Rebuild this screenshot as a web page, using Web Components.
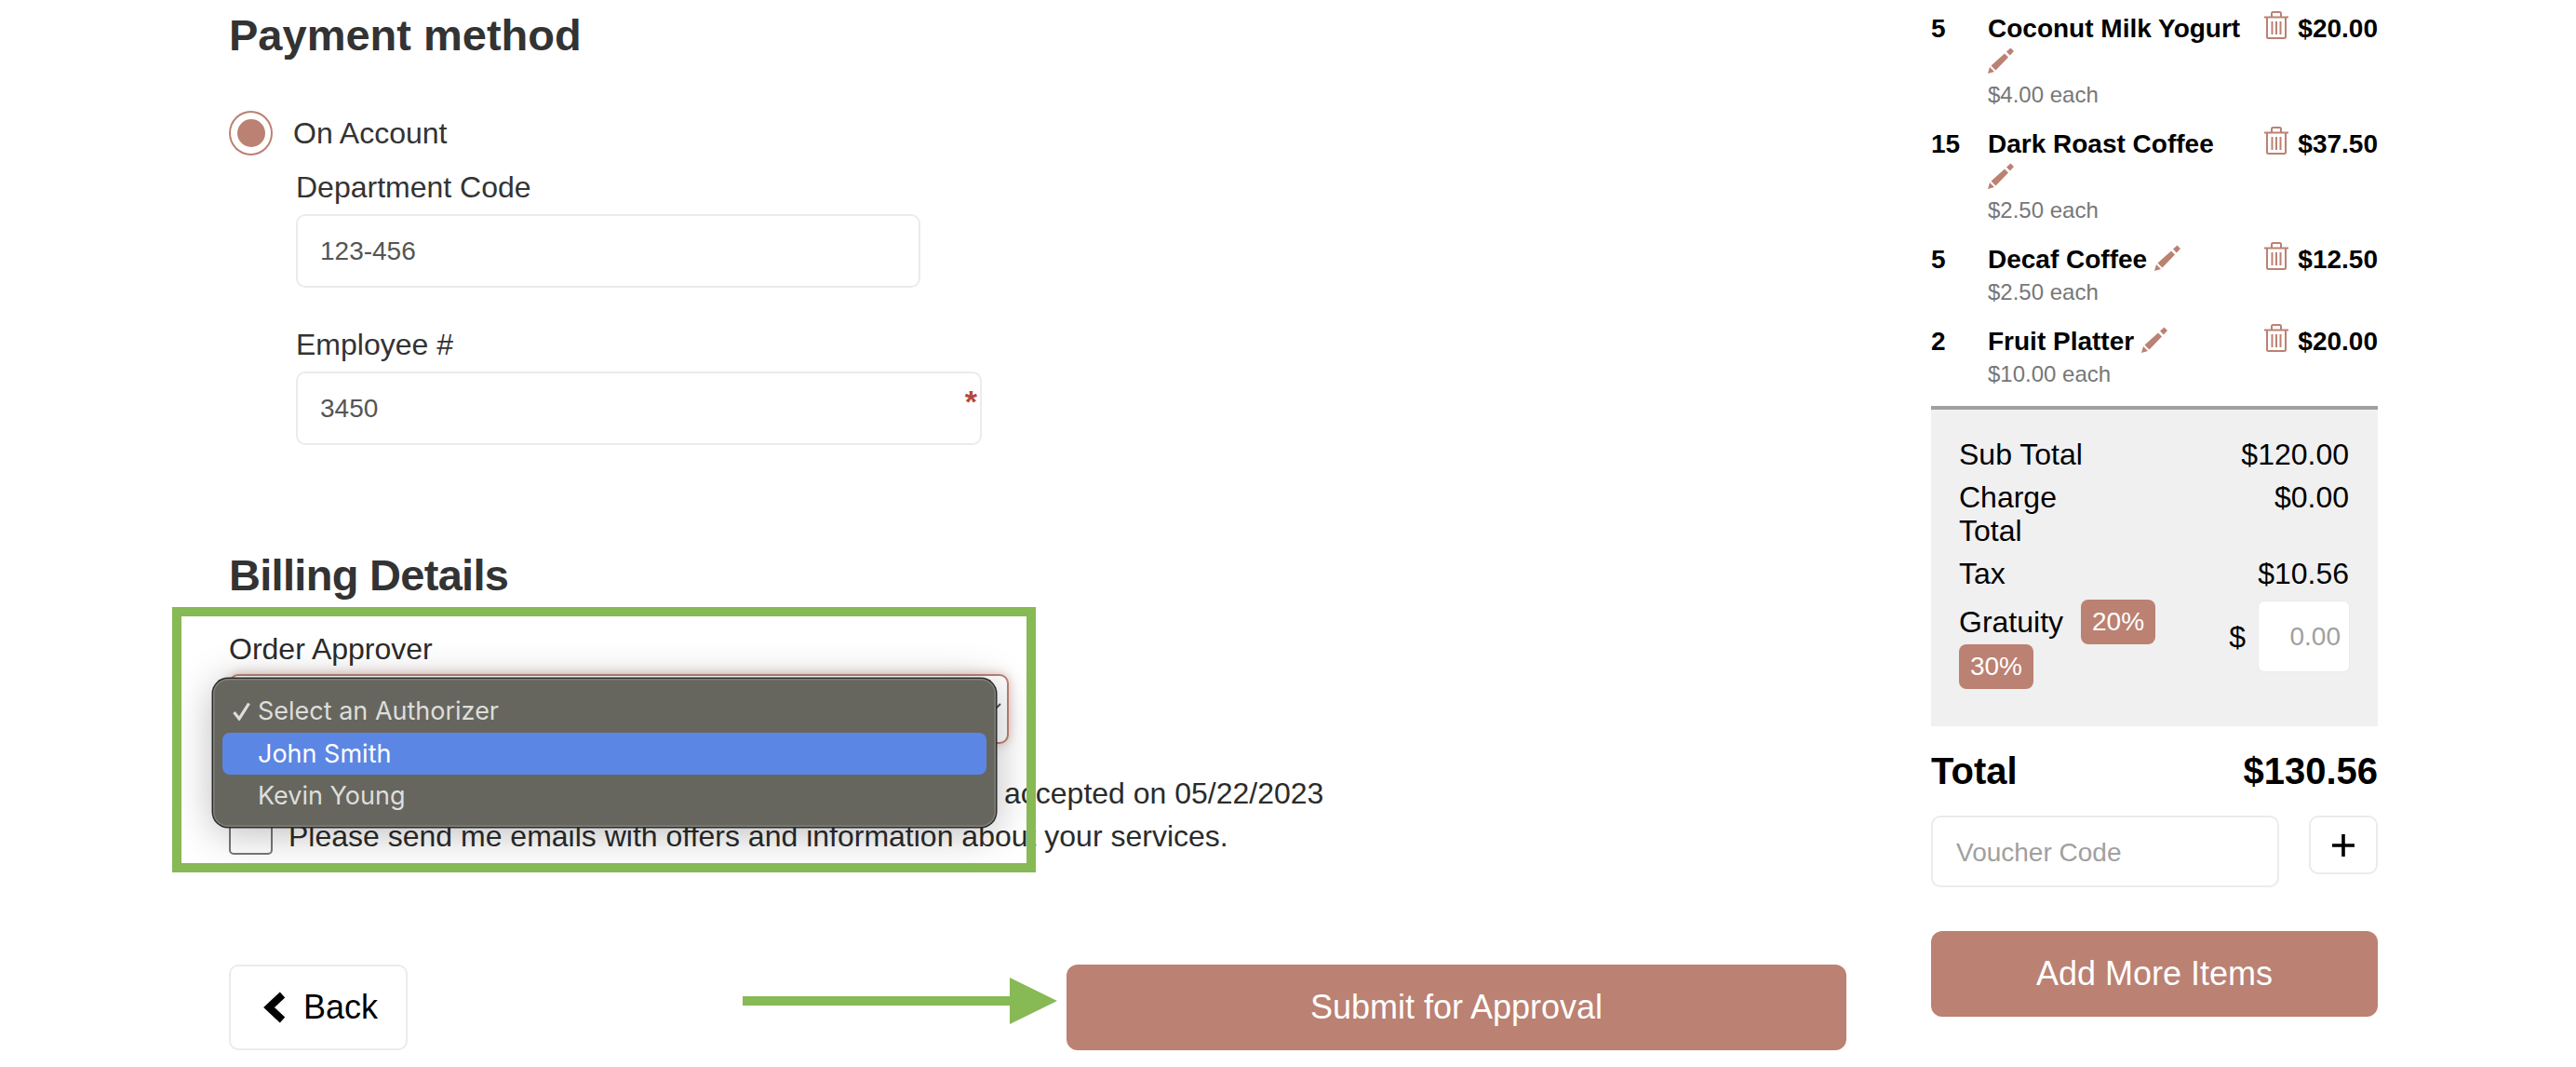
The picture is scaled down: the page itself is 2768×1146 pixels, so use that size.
<!DOCTYPE html>
<html>
<head>
<meta charset="utf-8">
<title>Checkout</title>
<style>
	html, body { margin: 0; background: #fff; }
	body { font: 32px/36px "Liberation Sans", Arial, sans-serif; color: #2b2b2b; height: 1146px; overflow: hidden; }
</style>
</head>
<body>
<checkout-page>
	<section-title>Payment method</section-title>
	<radio-row>On Account</radio-row>
	<form-field label="Department Code" value="123-456" width="671"></form-field>
	<form-field label="Employee #" value="3450" width="737" required style="margin-top:43px"></form-field>
	<section-title style="margin-top:112px;letter-spacing:-.7px">Billing Details</section-title>
	<approver-select label="Order Approver"></approver-select>
	<check-row style="margin-top:27px" indent="769">accepted on 05/22/2023</check-row>
	<check-row style="margin-top:0">Please send me emails with offers and information about your services.</check-row>
	<action-row></action-row>

	<order-line slot="aside" qty="5" each="$4.00 each" price="$20.00">Coconut Milk Yogurt</order-line>
	<order-line slot="aside" qty="15" each="$2.50 each" price="$37.50">Dark Roast Coffee</order-line>
	<order-line slot="aside" qty="5" each="$2.50 each" price="$12.50">Decaf Coffee</order-line>
	<order-line slot="aside" qty="2" each="$10.00 each" price="$20.00">Fruit Platter</order-line>
	<summary-box slot="aside" style="margin-top:-1px"></summary-box>
	<order-total slot="aside"></order-total>
	<voucher-row slot="aside"></voucher-row>
	<big-button slot="aside" style="margin-top:47px">Add More Items</big-button>
</checkout-page>

<script>
const ROSE = "#bb8172";

function make(html) {
	const t = document.createElement("template");
	t.innerHTML = html;
	return t;
}

// every element here is just a template in an open shadow root
class Base extends HTMLElement {
	constructor() {
		super();
		this.attachShadow({mode: "open"});
	}
	connectedCallback() {
		this.shadowRoot.appendChild(this.constructor.template.content.cloneNode(true));
		this.ready();
	}
	ready() {}
	fill(sel, attr) {
		this.shadowRoot.querySelector(sel).textContent = this.getAttribute(attr);
	}
}

class CheckoutPage extends Base {
	static template = make(`
		<style>
			:host { display: block; position: relative; height: 1146px; }
			#layout { display: flex; gap: 91px; padding-left: 246px; }
			#main { width: 1738px; padding-top: 10px; }
			#aside { width: 480px; padding-top: 13px; }
			/* annotations drawn on top of the screenshot */
			#frame { position: absolute; left: 185px; top: 652px; width: 908px; height: 265px; border: 10px solid #87b955; z-index: 5; }
			#arrow { position: absolute; left: 798px; top: 1050px; z-index: 5; }
		</style>
		<div id="layout">
			<div id="main"><slot></slot></div>
			<div id="aside"><slot name="aside"></slot></div>
		</div>
		<div id="frame"></div>
		<svg id="arrow" width="338" height="50" viewBox="0 0 338 50"><path fill="#87b955" d="M0 20H287V0L338 25L287 50V30H0Z"/></svg>
	`);
}

class SectionTitle extends Base {
	static template = make(`
		<style>
			:host { display: block; font-size: 47px; line-height: 56px; font-weight: 700; color: #333; }
		</style>
		<slot></slot>
	`);
}

class RadioRow extends Base {
	static template = make(`
		<style>
			:host { display: flex; align-items: center; gap: 22px; height: 48px; margin-top: 53px; color: #333; }
			#ring { box-sizing: border-box; width: 47px; height: 48px; border: 2px solid ${ROSE}; border-radius: 50%; display: grid; place-items: center; }
			#dot { width: 30px; height: 30px; background: ${ROSE}; border-radius: 50%; }
		</style>
		<div id="ring"><div id="dot"></div></div>
		<slot></slot>
	`);
}

class FormField extends Base {
	static template = make(`
		<style>
			:host { display: block; margin: 16px 0 0 72px; color: #333; }
			#box { box-sizing: border-box; position: relative; height: 79px; margin-top: 11px; border: 2px solid #ebebeb; border-radius: 10px; padding-left: 24px; display: flex; align-items: center; font-size: 28px; color: #555; }
			#star { display: none; position: absolute; right: 3px; top: 13px; font-size: 34px; line-height: 34px; font-weight: 700; color: #b5483f; }
		</style>
		<div id="label"></div>
		<div id="box"><span id="value"></span><span id="star">*</span></div>
	`);
	ready() {
		this.fill("#label", "label");
		this.fill("#value", "value");
		this.shadowRoot.querySelector("#box").style.width = this.getAttribute("width") + "px";
		if (this.hasAttribute("required")) this.shadowRoot.querySelector("#star").style.display = "block";
	}
}

class ApproverSelect extends Base {
	static template = make(`
		<style>
			:host { display: block; margin-top: 33px; color: #2b2b2b; }
			#field { box-sizing: border-box; position: relative; width: 838px; height: 75px; margin-top: 9px; border: 2px solid ${ROSE}; border-radius: 10px; background: #fff; box-shadow: 0 0 12px rgba(187,129,114,.55); }
			#chev { position: absolute; right: 5px; top: 27px; }
			/* native menu of the open select */
			#menu { box-sizing: border-box; position: absolute; left: -19px; top: 3px; width: 841px; height: 159px; z-index: 3; padding: 12px 10px; border-radius: 16px; background: #66665f; font: 27px/45.5px Inter, "Liberation Sans", sans-serif; color: #dededa; box-shadow: 0 0 0 1.5px #2c2c2a, inset 0 0 0 1.5px rgba(255,255,255,.18), 0 6px 44px rgba(0,0,0,.28); }
			.opt { position: relative; height: 45.5px; padding-left: 38px; border-radius: 8px; white-space: nowrap; }
			.opt.on { background: #5c86e3; color: #fff; }
			#tick { position: absolute; left: 11px; top: 13px; }
		</style>
		<div id="label"></div>
		<div id="field">
			<svg id="chev" width="20" height="14" viewBox="0 0 20 14"><path d="M2 3L10 11L18 3" fill="none" stroke="#555" stroke-width="2"/></svg>
			<div id="menu">
				<div class="opt"><svg id="tick" width="19" height="20" viewBox="0 0 19 20"><path d="M1.500 11L7 18L17.500 1.500" fill="none" stroke="#dededa" stroke-width="3.200"/></svg>Select an Authorizer</div>
				<div class="opt on">John Smith</div>
				<div class="opt">Kevin Young</div>
			</div>
		</div>
	`);
	ready() {
		this.fill("#label", "label");
	}
}

class CheckRow extends Base {
	static template = make(`
		<style>
			:host { display: flex; align-items: center; gap: 17px; height: 46px; white-space: nowrap; }
			#box { box-sizing: border-box; flex: none; width: 47px; height: 46px; border: 2px solid #777; border-radius: 5px; background: #fff; }
			#txt { padding-top: 5px; }
		</style>
		<div id="box"></div>
		<span id="txt"><slot></slot></span>
	`);
	ready() {
		// the start of the first line is hidden by the open menu
		const indent = this.getAttribute("indent");
		if (indent) this.shadowRoot.querySelector("#txt").style.marginLeft = indent + "px";
	}
}

class ActionRow extends Base {
	static template = make(`
		<style>
			:host { display: flex; justify-content: space-between; margin-top: 118px; }
			#back { box-sizing: border-box; width: 192px; height: 92px; border: 2px solid #ebebeb; border-radius: 10px; padding-left: 3px; display: flex; align-items: center; justify-content: center; gap: 19px; font-size: 36px; color: #000; }
			big-button { width: 838px; }
		</style>
		<div id="back">
			<svg width="26" height="34" viewBox="0 0 26 34"><path d="M22.500 3.500L8 17L22.500 30.500" fill="none" stroke="#000" stroke-width="8"/></svg>
			<span>Back</span>
		</div>
		<big-button>Submit for Approval</big-button>
	`);
}

class BigButton extends Base {
	static template = make(`
		<style>
			:host { display: flex; align-items: center; justify-content: center; height: 92px; border-radius: 12px; background: ${ROSE}; color: #fff; font-size: 36px; }
		</style>
		<slot></slot>
	`);
}

class OrderLine extends Base {
	static template = make(`
		<style>
			:host { display: grid; grid-template-columns: 61px 275px 1fr; margin-bottom: 17px; font-size: 28px; line-height: 36px; color: #000; font-weight: 700; }
			#pen { width: 28px; height: 28px; vertical-align: -3px; }
			#each { margin-top: -1px; font-size: 24px; font-weight: 400; color: #777; }
			#right { display: flex; justify-content: flex-end; gap: 10px; }
			#bin { width: 26px; height: 30px; margin-top: -1px; }
		</style>
		<div id="qty"></div>
		<div>
			<div id="name"><slot></slot> <svg id="pen" viewBox="0 0 28 28"><path fill="${ROSE}" d="M0 28L2 21L7 26ZM3.500 19.500L18 6.500L22 10.500L8.500 24.500ZM20 4.500L24.500 0.500L28 4L23.800 8.500Z"/></svg></div>
			<div id="each"></div>
		</div>
		<div id="right">
			<svg id="bin" viewBox="0 0 26 30" fill="none" stroke="${ROSE}" stroke-width="2"><path d="M0 6.500H26M8 6V2.500Q8 1 9.500 1H16.500Q18 1 18 2.500V6M3 6.500V27.500Q3 29 4.700 29H21.300Q23 29 23 27.500V6.500M8.500 11V25M13 11V25M17.500 11V25"/></svg>
			<div id="price"></div>
		</div>
	`);
	ready() {
		this.fill("#qty", "qty");
		this.fill("#each", "each");
		this.fill("#price", "price");
	}
}

class SummaryBox extends Base {
	static template = make(`
		<style>
			:host { display: block; border-top: 4px solid #a0a0a0; background: #f0f0f0; padding: 30px 31px 40px 30px; color: #000; font-size: 32px; line-height: 36px; }
			.row { display: flex; justify-content: space-between; margin-bottom: 10px; }
			.row > div:first-child { max-width: 160px; }
			#grat { display: flex; justify-content: space-between; margin-bottom: 0; }
			#tips { display: flex; flex-wrap: wrap; align-items: center; column-gap: 19px; width: 215px; align-content: flex-start; }
			.tip { width: 80px; height: 48px; border-radius: 8px; background: ${ROSE}; color: #fff; font-size: 28px; line-height: 48px; text-align: center; }
			#amount { display: flex; align-items: center; gap: 14px; align-self: flex-start; margin-top: 2px; }
			#input { box-sizing: border-box; width: 97px; height: 75px; border-radius: 6px; background: #fff; font-size: 28px; line-height: 75px; color: #a0a0a0; text-align: right; padding-right: 9px; box-shadow: 0 0 0 1px #ebebeb; }
		</style>
		<div class="row"><div>Sub Total</div><div>$120.00</div></div>
		<div class="row"><div>Charge Total</div><div>$0.00</div></div>
		<div class="row"><div>Tax</div><div>$10.56</div></div>
		<div id="grat">
			<div id="tips"><span>Gratuity</span><div class="tip">20%</div><div class="tip">30%</div></div>
			<div id="amount"><span>$</span><div id="input">0.00</div></div>
		</div>
	`);
}

class OrderTotal extends Base {
	static template = make(`
		<style>
			:host { display: flex; justify-content: space-between; margin-top: 24px; font-size: 40px; line-height: 48px; font-weight: 700; color: #000; }
		</style>
		<span>Total</span><span>$130.56</span>
	`);
}

class VoucherRow extends Base {
	static template = make(`
		<style>
			:host { display: flex; justify-content: space-between; align-items: flex-start; margin-top: 24px; }
			#code { box-sizing: border-box; width: 374px; height: 77px; border: 2px solid #ebebeb; border-radius: 10px; padding-left: 25px; font-size: 28px; line-height: 75px; color: #a0a0a0; }
			#add { box-sizing: border-box; width: 74px; height: 63px; border: 2px solid #ebebeb; border-radius: 10px; display: grid; place-items: center; }
		</style>
		<div id="code">Voucher Code</div>
		<div id="add"><svg width="24" height="24" viewBox="0 0 24 24"><path d="M12 0V24M0 12H24" stroke="#000" stroke-width="3.600"/></svg></div>
	`);
}

customElements.define("checkout-page", CheckoutPage);
customElements.define("section-title", SectionTitle);
customElements.define("radio-row", RadioRow);
customElements.define("form-field", FormField);
customElements.define("approver-select", ApproverSelect);
customElements.define("check-row", CheckRow);
customElements.define("big-button", BigButton);
customElements.define("action-row", ActionRow);
customElements.define("order-line", OrderLine);
customElements.define("summary-box", SummaryBox);
customElements.define("order-total", OrderTotal);
customElements.define("voucher-row", VoucherRow);
</script>
</body>
</html>
